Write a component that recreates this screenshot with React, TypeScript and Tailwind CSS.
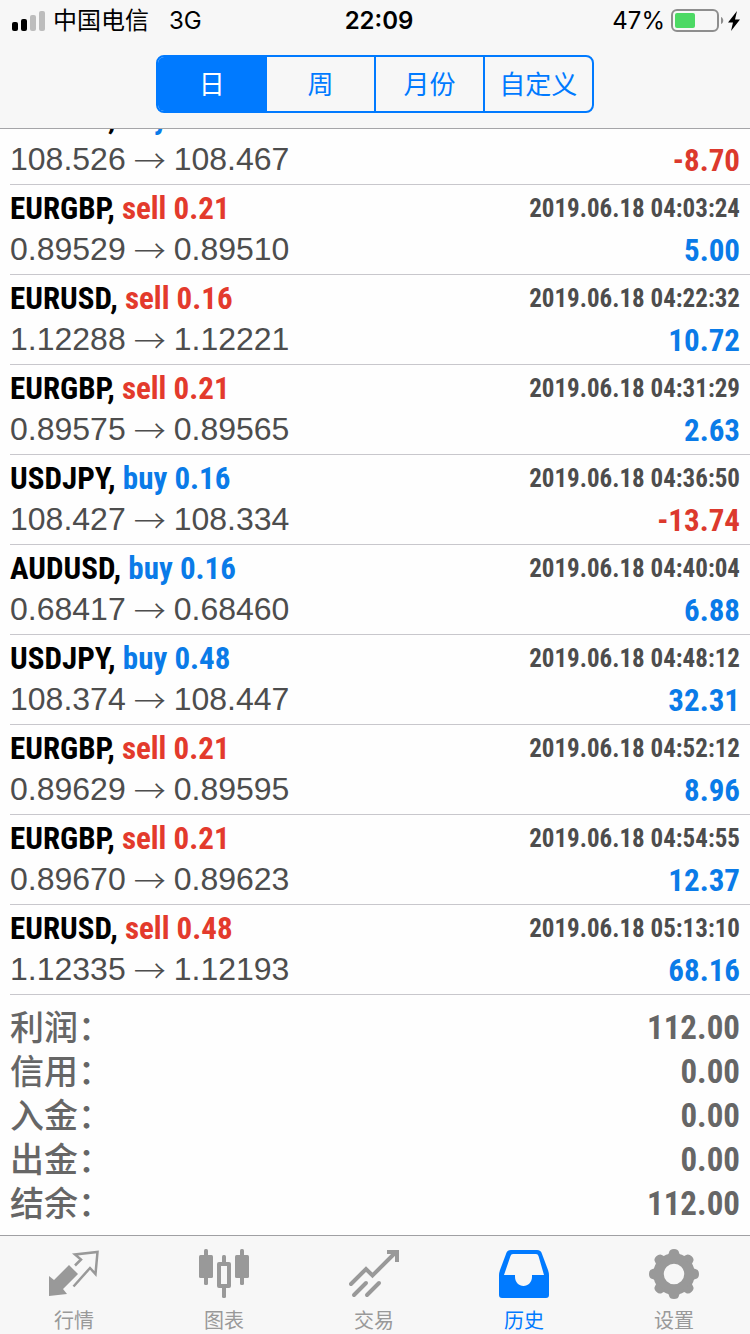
import React, { useState } from "react";

type Side = "buy" | "sell";

interface Deal {
  symbol: string;
  side: Side;
  volume: string;
  open: string;
  close: string;
  time?: string;
  profit: string;
}

const deals: Deal[] = [
  { symbol: "USDJPY", side: "buy", volume: "0.16", open: "108.526", close: "108.467", profit: "-8.70" },
  { symbol: "EURGBP", side: "sell", volume: "0.21", open: "0.89529", close: "0.89510", time: "2019.06.18 04:03:24", profit: "5.00" },
  { symbol: "EURUSD", side: "sell", volume: "0.16", open: "1.12288", close: "1.12221", time: "2019.06.18 04:22:32", profit: "10.72" },
  { symbol: "EURGBP", side: "sell", volume: "0.21", open: "0.89575", close: "0.89565", time: "2019.06.18 04:31:29", profit: "2.63" },
  { symbol: "USDJPY", side: "buy", volume: "0.16", open: "108.427", close: "108.334", time: "2019.06.18 04:36:50", profit: "-13.74" },
  { symbol: "AUDUSD", side: "buy", volume: "0.16", open: "0.68417", close: "0.68460", time: "2019.06.18 04:40:04", profit: "6.88" },
  { symbol: "USDJPY", side: "buy", volume: "0.48", open: "108.374", close: "108.447", time: "2019.06.18 04:48:12", profit: "32.31" },
  { symbol: "EURGBP", side: "sell", volume: "0.21", open: "0.89629", close: "0.89595", time: "2019.06.18 04:52:12", profit: "8.96" },
  { symbol: "EURGBP", side: "sell", volume: "0.21", open: "0.89670", close: "0.89623", time: "2019.06.18 04:54:55", profit: "12.37" },
  { symbol: "EURUSD", side: "sell", volume: "0.48", open: "1.12335", close: "1.12193", time: "2019.06.18 05:13:10", profit: "68.16" },
];

const totals = [
  { label: "利润：", value: "112.00" },
  { label: "信用：", value: "0.00" },
  { label: "入金：", value: "0.00" },
  { label: "出金：", value: "0.00" },
  { label: "结余：", value: "112.00" },
];

const periods = ["日", "周", "月份", "自定义"];

const narrow = "font-['Roboto_Condensed','Liberation_Sans',sans-serif] font-bold";

function StatusBar() {
  return (
    <div className="flex h-10 items-center justify-between px-[10px] pt-px font-['Inter','Noto_Sans_CJK_SC',sans-serif] text-2xl text-black">
      <div className="flex flex-1 items-center gap-2">
        <svg className="h-5 w-[35px]" viewBox="0 0 35 20" aria-hidden="true">
          <rect x="2" y="11" width="6" height="9" rx="2" fill="#000" />
          <rect x="11" y="8" width="6" height="12" rx="2" fill="#000" />
          <rect x="20" y="4" width="6" height="16" rx="2" fill="#bdbdbd" />
          <rect x="29" y="0" width="6" height="20" rx="2" fill="#bdbdbd" />
        </svg>
        <span>中国电信</span>
        <span className="ml-3">3G</span>
      </div>
      <div className="pl-2 text-center font-semibold">22:09</div>
      <div className="flex flex-1 items-center justify-end gap-1">
        <span>47%</span>
        <svg className="ml-0.5 h-6 w-[53px]" viewBox="0 0 53 24" aria-hidden="true">
          <rect x="1" y="1" width="46" height="21" rx="5" fill="none" stroke="#8e8e8e" strokeWidth="2" />
          <rect x="4" y="4" width="20" height="15" rx="2" fill="#4cd964" />
          <path d="M50 8c3 1 3 6 0 7z" fill="#8e8e8e" />
        </svg>
        <svg className="h-5 w-3" viewBox="0 0 12 20" aria-hidden="true">
          <path d="M9 0 0 11.500h5L3 20l9-11.500H7z" fill="#000" />
        </svg>
      </div>
    </div>
  );
}

function DealRow({ deal }: { deal: Deal }) {
  const loss = deal.profit.startsWith("-");
  return (
    <li className="ml-[10px] flex h-[90px] shrink-0 flex-col border-b border-[#c8c7cc] pt-1 pr-[10px]">
      <div className="flex h-10 items-center justify-between">
        <span className={`${narrow} text-[31px] leading-10 text-black`}>
          {deal.symbol},{" "}
          <span className={deal.side === "buy" ? "text-[#0a7be8]" : "text-[#e33a2c]"}>
            {deal.side} {deal.volume}
          </span>
        </span>
        {deal.time && <time className={`${narrow} text-[25px] leading-10 text-[#4d4d4d]`}>{deal.time}</time>}
      </div>
      <div className="flex h-10 items-center justify-between">
        <span className="flex items-center gap-2 text-[32px] leading-10 text-[#4d4d4d]">
          {deal.open}
          <span className="font-['Noto_Sans_CJK_SC',sans-serif] leading-8 font-light">→</span>
          {deal.close}
        </span>
        <span className={`${narrow} pt-1 text-[31px] leading-10 ${loss ? "text-[#dc392d]" : "text-[#0a7be8]"}`}>
          {deal.profit}
        </span>
      </div>
    </li>
  );
}

function QuotesIcon() {
  return (
    <svg className="size-[50px]" viewBox="0 0 50 50" aria-hidden="true">
      <path d="M0 27v20l18-2-4-5 15-15-9-9L5 31z" fill="currentColor" />
      <path d="m26 16.500 6-6-6-5L48.500 3l-2 22-5.500-6-16.500 18.500" fill="none" stroke="currentColor" strokeWidth="2.500" />
    </svg>
  );
}

function ChartIcon() {
  return (
    <svg className="size-[50px]" viewBox="0 0 50 50" aria-hidden="true" fill="currentColor">
      <rect x="0" y="6" width="14" height="23" rx="1.500" />
      <rect x="5" y="0" width="4" height="36" rx="1.500" />
      <rect x="36" y="6" width="14" height="23" rx="1.500" />
      <rect x="41" y="0" width="4" height="36" rx="1.500" />
      <rect x="23" y="6" width="4" height="9" rx="1.500" />
      <rect x="23" y="37" width="4" height="12" rx="1.500" />
      <rect x="20" y="15" width="10" height="22" fill="none" stroke="currentColor" strokeWidth="4" strokeLinejoin="round" />
    </svg>
  );
}

function TradeIcon() {
  return (
    <svg className="size-[50px]" viewBox="0 0 50 50" aria-hidden="true" fill="none" stroke="currentColor" strokeWidth="4" strokeLinecap="round">
      <path d="m2 35 15-15 6.500 6.500L46 4" />
      <path d="M38 3h10v10" strokeLinecap="butt" />
      <path d="m5 46 12-12M18 46l12-12" />
    </svg>
  );
}

function HistoryIcon() {
  return (
    <svg className="size-[50px]" viewBox="0 0 50 50" aria-hidden="true">
      <path
        fillRule="evenodd"
        fill="currentColor"
        d="M12 1h26q4 0 5 4l6 16q1 3 1 5v20q0 3-3 3H3q-3 0-3-3V26q0-2 1-5L7 5q1-4 5-4zm2 4q-2 0-2.500 2L5 26h11v2c0 5 4 9 8.500 9s8.500-4 8.500-9v-2h12L39.500 7Q39 5 37 5z"
      />
    </svg>
  );
}

const toothAngles = [0, 45, 90, 135, 180, 225, 270, 315];

function SettingsIcon() {
  return (
    <svg className="size-[50px]" viewBox="0 0 50 50" aria-hidden="true" fill="currentColor">
      <circle cx="25" cy="25" r="15.500" fill="none" stroke="currentColor" strokeWidth="10.500" />
      {toothAngles.map((angle) => (
        <path key={angle} transform={`rotate(${angle} 25 25)`} d="M17.500 7q2-.5 2.500-3.500Q20.500 0 25 0t5 3.500q.5 3 2.500 3.500z" />
      ))}
    </svg>
  );
}

const tabs = [
  { label: "行情", Icon: QuotesIcon },
  { label: "图表", Icon: ChartIcon },
  { label: "交易", Icon: TradeIcon },
  { label: "历史", Icon: HistoryIcon },
  { label: "设置", Icon: SettingsIcon },
];

export default function App() {
  const [period, setPeriod] = useState("日");
  const [tab, setTab] = useState("历史");

  return (
    <div className="flex h-screen flex-col bg-[#fefefe] font-['Liberation_Sans','Noto_Sans_CJK_SC',sans-serif]">
      <header className="shrink-0 border-b border-[#a5a5a8] bg-[#f7f7f7] pb-[15px]">
        <StatusBar />
        <div className="mx-auto mt-[15px] flex h-[58px] w-7/12 divide-x-2 divide-[#007aff] overflow-hidden rounded-lg border-2 border-[#007aff]">
          {periods.map((name) => (
            <button
              key={name}
              type="button"
              aria-pressed={period === name}
              onClick={() => setPeriod(name)}
              className={`flex-1 pt-0.5 text-[26px] font-normal ${period === name ? "bg-[#007aff] text-white" : "text-[#007aff]"}`}
            >
              {name}
            </button>
          ))}
        </div>
      </header>

      <main className="flex min-h-0 flex-1 flex-col justify-end overflow-hidden">
        <ul className="flex flex-col">
          {deals.map((deal, index) => (
            <DealRow key={index} deal={deal} />
          ))}
        </ul>
        <dl className="shrink-0 px-[10px] pt-[9px] pb-[11px] text-[#666]">
          {totals.map((total) => (
            <div key={total.label} className="flex h-11 items-center justify-between">
              <dt className="font-['Noto_Sans_CJK_SC',sans-serif] text-[34px] leading-11 font-medium">{total.label}</dt>
              <dd className={`${narrow} pt-1 text-[33px] leading-10`}>{total.value}</dd>
            </div>
          ))}
        </dl>
      </main>

      <nav className="flex h-[99px] shrink-0 border-t border-[#a0a0a3] bg-[#f7f7f7]">
        {tabs.map(({ label, Icon }) => (
          <button
            key={label}
            type="button"
            aria-current={tab === label ? "page" : undefined}
            onClick={() => setTab(label)}
            className={`flex flex-1 flex-col items-center gap-[10px] pt-[13px] pr-0.5 ${tab === label ? "text-[#007aff]" : "text-[#999]"}`}
          >
            <Icon />
            <span className="text-xl leading-6 font-normal">{label}</span>
          </button>
        ))}
      </nav>
    </div>
  );
}
